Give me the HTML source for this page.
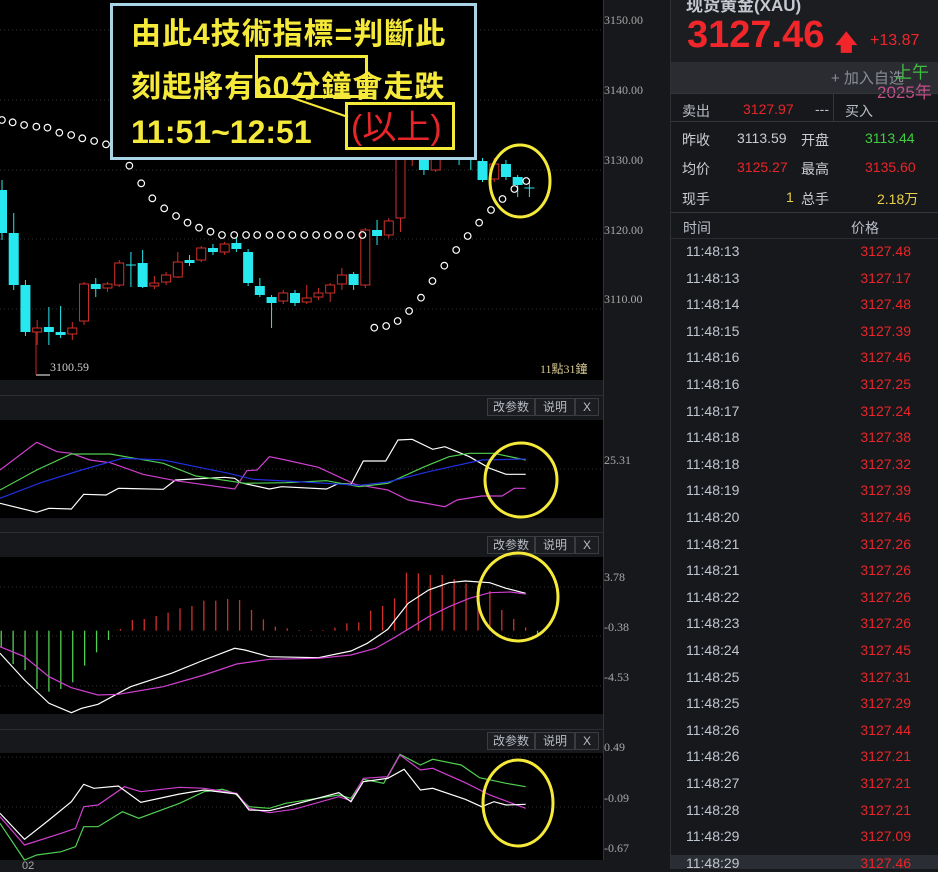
<!DOCTYPE html>
<html><head><meta charset="utf-8">
<style>
*{margin:0;padding:0;box-sizing:border-box}
body{width:938px;height:869px;overflow:hidden;background:#17181b;font-family:"Liberation Sans","Noto Sans CJK SC",sans-serif;position:relative}
.a{position:absolute}
.ax{position:absolute;left:604px;font-size:12px;color:#a8a8a8;font-family:"Liberation Serif",serif}
.btn{position:absolute;height:18px;border:1px solid #3a3c42;background:#1c1d21;color:#b8bcc4;font-size:12px;line-height:16px;text-align:center}
.rp{position:absolute;left:671px;width:267px;color:#c9ccd2;font-size:14px}
.tk{position:absolute;left:686px;width:225px;font-size:14px;color:#c0c6d0}
.tk span{position:absolute;right:0;color:#e8262a}
.an{position:absolute;font-size:30px;font-weight:bold;color:#f5e93a;white-space:nowrap;font-family:'Liberation Sans','Noto Sans CJK TC',sans-serif;letter-spacing:1px}
</style></head><body>
<div class="a" style="left:0;top:0;width:603px;height:380px;background:#000"></div>
<div class="a" style="left:0;top:395px;width:603px;height:1px;background:#2c2e33"></div>
<div class="a" style="left:0;top:420px;width:603px;height:98px;background:#000"></div>
<div class="a" style="left:0;top:532px;width:603px;height:1px;background:#2c2e33"></div>
<div class="a" style="left:0;top:557px;width:603px;height:157px;background:#000"></div>
<div class="a" style="left:0;top:729px;width:603px;height:1px;background:#2c2e33"></div>
<div class="a" style="left:0;top:753px;width:603px;height:107px;background:#000"></div>
<div class="a" style="left:603px;top:0;width:1px;height:860px;background:#333"></div>
<div class="a" style="left:670px;top:0;width:1px;height:869px;background:#2e3036"></div>

<svg class="a" style="left:0;top:0" width="603" height="869" id="sv">
<g stroke="#333" stroke-dasharray="1,3">
<line x1="0" y1="30" x2="603" y2="30"/><line x1="0" y1="100" x2="603" y2="100"/><line x1="0" y1="170" x2="603" y2="170"/><line x1="0" y1="239" x2="603" y2="239"/><line x1="0" y1="309" x2="603" y2="309"/>
<line x1="0" y1="469" x2="603" y2="469"/>
<line x1="0" y1="587" x2="603" y2="587"/><line x1="0" y1="636" x2="603" y2="636"/><line x1="0" y1="686" x2="603" y2="686"/>
<line x1="0" y1="757" x2="603" y2="757"/><line x1="0" y1="807" x2="603" y2="807"/>
</g>
<line x1="36" y1="375" x2="50" y2="375" stroke="#fff"/>
<line x1="36" y1="328" x2="36" y2="375" stroke="#c22"/>
</svg>

<div class="a" style="left:50px;top:360px;font-size:12px;color:#ccc;font-family:'Liberation Serif',serif">3100.59</div>
<div class="a" style="left:540px;top:360px;font-size:12px;color:#d8c890;font-family:'Liberation Serif',serif">11點31鐘</div>

<div class="ax" style="top:13px">3150.00</div>
<div class="ax" style="top:83px">3140.00</div>
<div class="ax" style="top:153px">3130.00</div>
<div class="ax" style="top:223px">3120.00</div>
<div class="ax" style="top:292px">3110.00</div>
<div class="ax" style="top:453px">25.31</div>
<div class="ax" style="top:570px">3.78</div>
<div class="ax" style="top:620px">-0.38</div>
<div class="ax" style="top:670px">-4.53</div>
<div class="ax" style="top:740px">0.49</div>
<div class="ax" style="top:791px">-0.09</div>
<div class="ax" style="top:841px">-0.67</div>
<div class="a" style="left:22px;top:860px;font-size:11px;color:#aaa">02</div>

<div class="btn" style="left:487px;top:398px;width:48px">改参数</div>
<div class="btn" style="left:535px;top:398px;width:40px">说明</div>
<div class="btn" style="left:575px;top:398px;width:24px">X</div>
<div class="btn" style="left:487px;top:536px;width:48px">改参数</div>
<div class="btn" style="left:535px;top:536px;width:40px">说明</div>
<div class="btn" style="left:575px;top:536px;width:24px">X</div>
<div class="btn" style="left:487px;top:732px;width:48px">改参数</div>
<div class="btn" style="left:535px;top:732px;width:40px">说明</div>
<div class="btn" style="left:575px;top:732px;width:24px">X</div>

<div class="a" style="left:110px;top:3px;width:367px;height:157px;border:3px solid #a9d3e6;background:#000"></div>
<div class="an" style="left:131px;top:9px">由此4技術指標=判斷此</div>
<div class="an" style="left:131px;top:62px">刻起將有60分鐘會走跌</div>
<div class="a" style="left:255px;top:55px;width:113px;height:43px;border:3px solid #f5e93a"></div>
<div class="an" style="left:131px;top:114px;font-size:32px;letter-spacing:0">11:51~12:51</div>
<div class="a" style="left:345px;top:102px;width:110px;height:48px;border:3px solid #f5e93a;background:#000"></div>
<div class="a" style="left:351px;top:100px;font-size:34px;color:#e8262a;white-space:nowrap;font-family:'Liberation Sans','Noto Sans CJK TC',sans-serif">(以上)</div>
<svg class="a" style="left:0;top:0" width="603" height="869">
<line x1="290" y1="97" x2="348" y2="117" stroke="#f5e93a" stroke-width="2"/>
<g fill="none" stroke="#f5e93a" stroke-width="3">
<ellipse cx="520" cy="181" rx="30" ry="36"/>
<ellipse cx="521" cy="480" rx="36" ry="37"/>
<ellipse cx="518" cy="597" rx="40" ry="44"/>
<ellipse cx="518" cy="803" rx="35" ry="43"/>
</g>
</svg>

<div class="a" style="left:671px;top:0;width:267px;height:62px;background:#1c1d21"></div>
<div class="rp" style="top:-9px;left:686px;font-size:17px;font-weight:bold;color:#c5c9d0">现货黄金(XAU)</div>
<div class="rp" style="top:14px;left:687px;font-size:38px;font-weight:bold;color:#f0262b">3127.46</div>
<div class="rp" style="top:26px;left:835px;font-size:22px;font-weight:bold;color:#f0262b">🡅</div>
<div class="rp" style="top:32px;left:870px;font-size:16px;color:#f0262b">+13.87</div>
<div class="a" style="left:671px;top:62px;width:267px;height:31px;background:#2a2c31"></div>
<div class="rp" style="top:67px;left:831px;font-size:15px;color:#8a8e96">+ 加入自选</div>
<div class="rp" style="top:58px;left:895px;font-size:17px;color:#3fbf3f">上午</div>
<div class="rp" style="top:78px;left:877px;font-size:17px;color:#c0508a">2025年</div>
<div class="a" style="left:671px;top:93px;width:267px;height:1px;background:#34363b"></div>
<div class="rp" style="top:101px;left:682px;color:#b9bec7">卖出</div>
<div class="rp" style="top:101px;left:743px;color:#e8262a">3127.97</div>
<div class="rp" style="top:101px;left:815px;color:#b9bec7">---</div>
<div class="a" style="left:833px;top:93px;width:1px;height:28px;background:#34363b"></div>
<div class="rp" style="top:101px;left:845px;color:#b9bec7">买入</div>
<div class="a" style="left:671px;top:121px;width:267px;height:1px;background:#34363b"></div>
<div class="rp" style="top:130px;left:682px">昨收</div><div class="rp" style="top:130px;left:737px">3113.59</div>
<div class="rp" style="top:130px;left:801px">开盘</div><div class="rp" style="top:130px;left:865px;color:#3fcf3f">3113.44</div>
<div class="rp" style="top:159px;left:682px">均价</div><div class="rp" style="top:159px;left:737px;color:#e8262a">3125.27</div>
<div class="rp" style="top:159px;left:801px">最高</div><div class="rp" style="top:159px;left:865px;color:#e8262a">3135.60</div>
<div class="rp" style="top:189px;left:682px">现手</div><div class="rp" style="top:189px;left:786px;color:#e8d04a">1</div>
<div class="rp" style="top:189px;left:801px">总手</div><div class="rp" style="top:189px;left:877px;color:#e8d04a">2.18万</div>
<div class="a" style="left:671px;top:212px;width:267px;height:1px;background:#34363b"></div>
<div class="rp" style="top:218px;left:683px;color:#b9bec7">时间</div>
<div class="rp" style="top:218px;left:851px;color:#b9bec7">价格</div>
<div class="a" style="left:671px;top:238px;width:267px;height:1px;background:#2a2c31"></div>
<div class="a" style="left:671px;top:855px;width:267px;height:14px;background:#2a2d33"></div>
<div id="tks"></div>

<script>
var sv=document.getElementById('sv'),NS='http://www.w3.org/2000/svg';
function el(t,a){var e=document.createElementNS(NS,t);for(var k in a)e.setAttribute(k,a[k]);sv.appendChild(e);return e}
var C=[[0,190,233,180,240],[0,233,285,213,290],[0,285,332,280,336],[1,328,332,320,345],[0,327,332,307,345],[0,332,335,306,338],[1,328,334,322,340],[1,284,321,282,325],[0,284,289,278,297],[1,284,288,282,292],[1,263,285,260,287],[0,265,265,252,287],[0,263,287,250,288],[1,283,286,276,289],[1,275,282,272,285],[1,262,277,252,278],[0,260,263,255,266],[1,248,260,246,262],[0,248,252,244,255],[1,244,252,242,255],[0,243,249,238,252],[0,252,283,249,286],[0,286,295,278,297],[0,297,303,295,328],[1,293,301,290,304],[0,293,303,290,306],[1,298,302,285,304],[1,293,297,288,300],[1,285,293,283,302],[1,275,284,268,290],[0,274,285,272,290],[1,230,285,228,288],[0,230,236,220,245],[1,221,235,218,238],[1,154,218,150,232],[1,148,154,140,166],[0,146,170,140,175],[1,150,170,140,172],[0,150,152,140,155],[0,153,155,143,165],[0,154,158,150,170],[0,161,180,158,182],[1,164,179,158,182],[0,164,177,160,180],[0,177,185,175,197],[0,188,188,182,197]];
C.forEach(function(c,i){var x=2+11.72*i,col=c[0]?'#d0302a':'#27e8ee';
el('line',{x1:x,y1:c[3],x2:x,y2:c[4],stroke:col});
if(c[2]-c[1]<2){el('line',{x1:x-5,y1:c[1],x2:x+5,y2:c[1],stroke:col})}
else if(c[0])el('rect',{x:x-4.5,y:c[1],width:9,height:c[2]-c[1],fill:'#000',stroke:col});
else el('rect',{x:x-5,y:c[1],width:10,height:c[2]-c[1],fill:col});});
var D=[[5,360],[33,367],[63,375],[95,380],[124,383],[155,398],[186,405],[215,415],[246,423],[277,433],[306,460],[338,497],[369,550],[398,595],[429,625],[460,648],[490,668],[520,683],[550,695],[580,705],[612,705],[643,705],[672,705],[704,705],[734,705],[764,705],[795,705],[826,705],[856,705],[886,705],[917,705],[947,705],[978,983],[1009,978],[1039,963],[1069,933],[1100,893],[1130,843],[1161,797],[1192,750],[1222,708],[1252,668],[1283,630],[1313,597],[1344,567],[1375,543]];
D.forEach(function(d){el('circle',{cx:d[0]/2.613,cy:d[1]/3,r:3.3,fill:'none',stroke:'#fff','stroke-width':1.2})});
function pl(s,col){var p=s.map(function(q){return (q[0]/2.45).toFixed(1)+','+(q[1]/3+390).toFixed(1)}).join(' ');el('polyline',{points:p,fill:'none',stroke:col,'stroke-width':1.2})}
pl([[0,340],[90,367],[120,355],[175,357],[205,313],[260,315],[290,295],[400,298],[430,270],[550,262],[575,265],[590,278],[660,297],[690,290],[800,297],[830,280],[860,283],[890,213],[945,213],[975,150],[1010,148],[1060,178],[1090,170],[1150,200],[1200,235],[1240,253],[1288,253]],'#fff');
pl([[0,240],[90,157],[140,185],[175,190],[220,210],[270,218],[350,253],[430,272],[575,297],[605,242],[630,240],[660,200],[700,210],[780,232],[870,283],[950,300],[1000,330],[1090,350],[1120,330],[1180,318],[1230,318],[1260,295],[1288,295]],'#d040d0');
pl([[0,300],[90,240],[175,192],[270,192],[330,205],[400,220],[480,258],[600,280],[700,278],[800,272],[880,290],[950,280],[1040,230],[1100,200],[1150,190],[1210,190],[1288,210]],'#50d050');
pl([[0,325],[100,278],[200,240],[300,205],[400,210],[480,230],[560,250],[620,268],[700,273],[880,286],[950,276],[1050,245],[1180,210],[1288,207]],'#2030e0');
var B=[772,822,840,897,905,897,877,827,787,750,717,690,687,678,668,655,648,632,632,627,630,660,688,710,715,720,720,720,713,700,697,662,648,625,548,550,555,555,567,580,586,603,660,687,712,733];
B.forEach(function(v,i){var x=(3+29.2*i)/2.45,z=722/3+390,y=v/3+390;el('line',{x1:x,y1:z,x2:x,y2:y,stroke:(v>722)?'#50d050':'#d0302a','stroke-width':1.3})});
pl([[0,790],[60,870],[120,940],[175,968],[200,955],[240,943],[320,890],[420,850],[500,810],[575,775],[600,780],[660,800],[780,803],[860,783],[900,760],[950,718],[1000,640],[1050,600],[1100,578],[1140,573],[1200,578],[1240,595],[1288,610]],'#fff');
pl([[0,770],[60,800],[120,860],[175,893],[240,915],[290,913],[400,890],[500,855],[580,822],[660,808],[780,805],[860,795],[920,775],[970,740],[1050,680],[1100,650],[1150,625],[1200,608],[1250,606],[1288,612]],'#d040d0');
pl([[0,1300],[60,1410],[90,1395],[150,1385],[185,1370],[205,1310],[240,1310],[300,1265],[340,1285],[440,1240],[500,1205],[545,1198],[575,1210],[610,1250],[660,1255],[700,1240],[830,1215],[860,1225],[890,1168],[940,1180],[980,1093],[1030,1125],[1060,1108],[1130,1125],[1175,1163],[1240,1180],[1288,1190]],'#50d050');
pl([[0,1280],[60,1365],[150,1330],[185,1315],[205,1250],[240,1245],[305,1190],[345,1205],[440,1192],[500,1195],[580,1210],[610,1255],[660,1268],[720,1258],[830,1220],[860,1232],[890,1165],[950,1160],[980,1095],[1030,1140],[1060,1135],[1140,1178],[1200,1215],[1288,1255]],'#d040d0');
pl([[0,1270],[60,1348],[120,1290],[175,1235],[205,1183],[230,1195],[290,1188],[345,1237],[440,1212],[500,1200],[580,1212],[610,1260],[660,1262],[700,1250],[830,1208],[860,1235],[890,1175],[950,1165],[990,1138],[1030,1200],[1060,1195],[1140,1228],[1180,1250],[1210,1235],[1240,1245],[1288,1243]],'#fff');
var T=[["11:48:13","3127.48"],["11:48:13","3127.17"],["11:48:14","3127.48"],["11:48:15","3127.39"],["11:48:16","3127.46"],["11:48:16","3127.25"],["11:48:17","3127.24"],["11:48:18","3127.38"],["11:48:18","3127.32"],["11:48:19","3127.39"],["11:48:20","3127.46"],["11:48:21","3127.26"],["11:48:21","3127.26"],["11:48:22","3127.26"],["11:48:23","3127.26"],["11:48:24","3127.45"],["11:48:25","3127.31"],["11:48:25","3127.29"],["11:48:26","3127.44"],["11:48:26","3127.21"],["11:48:27","3127.21"],["11:48:28","3127.21"],["11:48:29","3127.09"],["11:48:29","3127.46"]];
var h='';T.forEach(function(t,i){h+='<div class="tk" style="top:'+(243+26.6*i).toFixed(1)+'px">'+t[0]+'<span>'+t[1]+'</span></div>'});
document.getElementById('tks').innerHTML=h;
</script>
</body></html>
